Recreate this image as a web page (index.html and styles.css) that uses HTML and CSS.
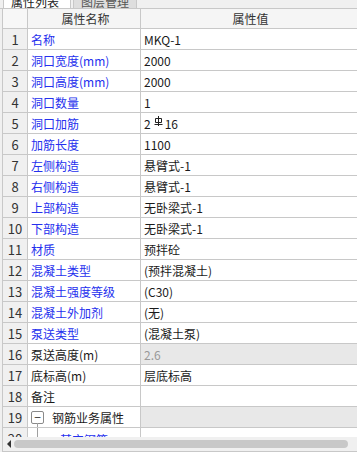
FILE: index.html
```html
<!DOCTYPE html>
<html>

<head>
    <title>属性列表</title>
    <meta name="viewport" content="width=device-width, initial-scale=1">
    <link rel="stylesheet" href="styles.css">
</head>

<body>
    <div class="pane">
        <div class="tabs">
            <div class="tab active">属性列表</div>
            <div class="tab">图层管理</div>
        </div>

        <div class="view">
            <div class="row head">
                <div class="num"></div>
                <div class="name">属性名称</div>
                <div class="val">属性值</div>
            </div>

            <div class="row"><div class="num">1</div><div class="name blue">名称</div><div class="val">MKQ-1</div></div>
            <div class="row"><div class="num">2</div><div class="name blue">洞口宽度(mm)</div><div class="val">2000</div></div>
            <div class="row"><div class="num">3</div><div class="name blue">洞口高度(mm)</div><div class="val">2000</div></div>
            <div class="row"><div class="num">4</div><div class="name blue">洞口数量</div><div class="val">1</div></div>
            <div class="row">
                <div class="num">5</div><div class="name blue">洞口加筋</div>
                <div class="val">2<svg class="bar" width="9" height="10" viewBox="0 0 9 10"><path d="M4.5 0V10M1.5 2.5H7.5V6.5H1.5ZM0.5 8.5H8.5" fill="none" stroke="#222" stroke-width="1"/></svg>16</div>
            </div>
            <div class="row"><div class="num">6</div><div class="name blue">加筋长度</div><div class="val">1100</div></div>
            <div class="row"><div class="num">7</div><div class="name blue">左侧构造</div><div class="val">悬臂式-1</div></div>
            <div class="row"><div class="num">8</div><div class="name blue">右侧构造</div><div class="val">悬臂式-1</div></div>
            <div class="row"><div class="num">9</div><div class="name blue">上部构造</div><div class="val">无卧梁式-1</div></div>
            <div class="row"><div class="num">10</div><div class="name blue">下部构造</div><div class="val">无卧梁式-1</div></div>
            <div class="row"><div class="num">11</div><div class="name blue">材质</div><div class="val">预拌砼</div></div>
            <div class="row"><div class="num">12</div><div class="name blue">混凝土类型</div><div class="val">(预拌混凝土)</div></div>
            <div class="row"><div class="num">13</div><div class="name blue">混凝土强度等级</div><div class="val">(C30)</div></div>
            <div class="row"><div class="num">14</div><div class="name blue">混凝土外加剂</div><div class="val">(无)</div></div>
            <div class="row"><div class="num">15</div><div class="name blue">泵送类型</div><div class="val">(混凝土泵)</div></div>
            <div class="row"><div class="num">16</div><div class="name">泵送高度(m)</div><div class="val off">2.6</div></div>
            <div class="row"><div class="num">17</div><div class="name">底标高(m)</div><div class="val">层底标高</div></div>
            <div class="row"><div class="num">18</div><div class="name">备注</div><div class="val"></div></div>
            <div class="row">
                <div class="num">19</div>
                <div class="name group"><span class="fold">−</span>钢筋业务属性</div>
                <div class="val shade"></div>
            </div>
            <div class="row">
                <div class="num">20</div>
                <div class="name child blue">其它钢筋</div>
                <div class="val"></div>
            </div>
        </div>

        <div class="hscroll">
            <span class="arrow"></span>
            <div class="thumb"></div>
        </div>
    </div>
</body>

</html>
```

FILE: styles.css
```css
* {
    box-sizing: border-box;
}

body {
    margin: 0;
    background-color: #f0f0f0;
    font-family: "Noto Sans CJK SC", "DejaVu Sans", sans-serif;
    font-size: 12px;
    color: #1a1a1a;
}

.pane {
    width: 357px;
    height: 452px;
    overflow: hidden;
    display: flex;
    flex-direction: column;
}

/* tab strip, only the lower edge is in view */
.tabs {
    height: 9px;
    flex: none;
    display: flex;
    align-items: flex-end;
    overflow: hidden;
    padding-left: 3px;
    border-bottom: 1px solid #c8c8c8;
}

.tab {
    height: 22px;
    line-height: 12px;
    padding: 9px 7px 0;
    margin-right: 2px;
    border: 1px solid #c8c8c8;
    border-bottom: 0;
    background-color: #dedede;
    color: #555;
}

.tab.active {
    width: 68px;
    background-color: #fff;
    color: #222;
}

.view {
    flex: 1;
    overflow: hidden;
    margin-left: 2px;
    border-left: 1px solid #c8c8c8;
    background-color: #fff;
}

.row {
    display: grid;
    grid-template-columns: 25px 113px 1fr;
    height: 21px;
    border-bottom: 1px solid #c8c8c8;
}

.row > div {
    display: flex;
    align-items: center;
    white-space: nowrap;
    overflow: hidden;
}

.num {
    justify-content: center;
    background-color: #f0f0f0;
    border-right: 1px solid #c8c8c8;
    color: #333;
    font-size: 13px;
}

.name {
    padding-left: 3px;
    border-right: 1px solid #c8c8c8;
}

.val {
    padding-left: 3px;
}

.head {
    height: 20px;
    background-color: #f5f5f5;
}

.head .num {
    background-color: #f7f7f7;
}

.head .name,
.head .val {
    justify-content: center;
    color: #333;
}

.blue {
    color: #2530ee;
}

.off {
    background-color: #e8e8e8;
    color: #999;
}

.shade {
    background-color: #e8e8e8;
}

.bar {
    margin: -5px 2px 0 3px;
}

/* tree row */
.group {
    position: relative;
}

.fold {
    width: 13px;
    height: 13px;
    margin-right: 8px;
    border: 1px solid #8a8a8a;
    border-radius: 2px;
    background-color: #fff;
    line-height: 10px;
    text-align: center;
    font-size: 12px;
    color: #333;
}

.group:after {
    content: "";
    position: absolute;
    left: 9px;
    top: 16px;
    height: 6px;
    border-left: 1px solid #a0a0a0;
}

.child {
    position: relative;
    align-items: flex-start !important;
    padding-top: 3px;
    padding-left: 32px !important;
}

.child:before {
    content: "";
    position: absolute;
    left: 9px;
    top: 0;
    height: 12px;
    border-left: 1px solid #a0a0a0;
}

.hscroll {
    flex: none;
    height: 15px;
    display: flex;
    align-items: center;
    padding: 0 9px 0 4px;
    background-color: #f0f0f0;
    border-bottom: 1px solid #c8c8c8;
    border-left: 1px solid #c8c8c8;
    margin-left: 2px;
}

.arrow {
    width: 0;
    height: 0;
    border-top: 4px solid transparent;
    border-bottom: 4px solid transparent;
    border-right: 4px solid #333;
    margin-right: 3px;
}

.thumb {
    flex: 1;
    height: 8px;
    border-radius: 4px;
    background-color: #c8c8c8;
}
```
